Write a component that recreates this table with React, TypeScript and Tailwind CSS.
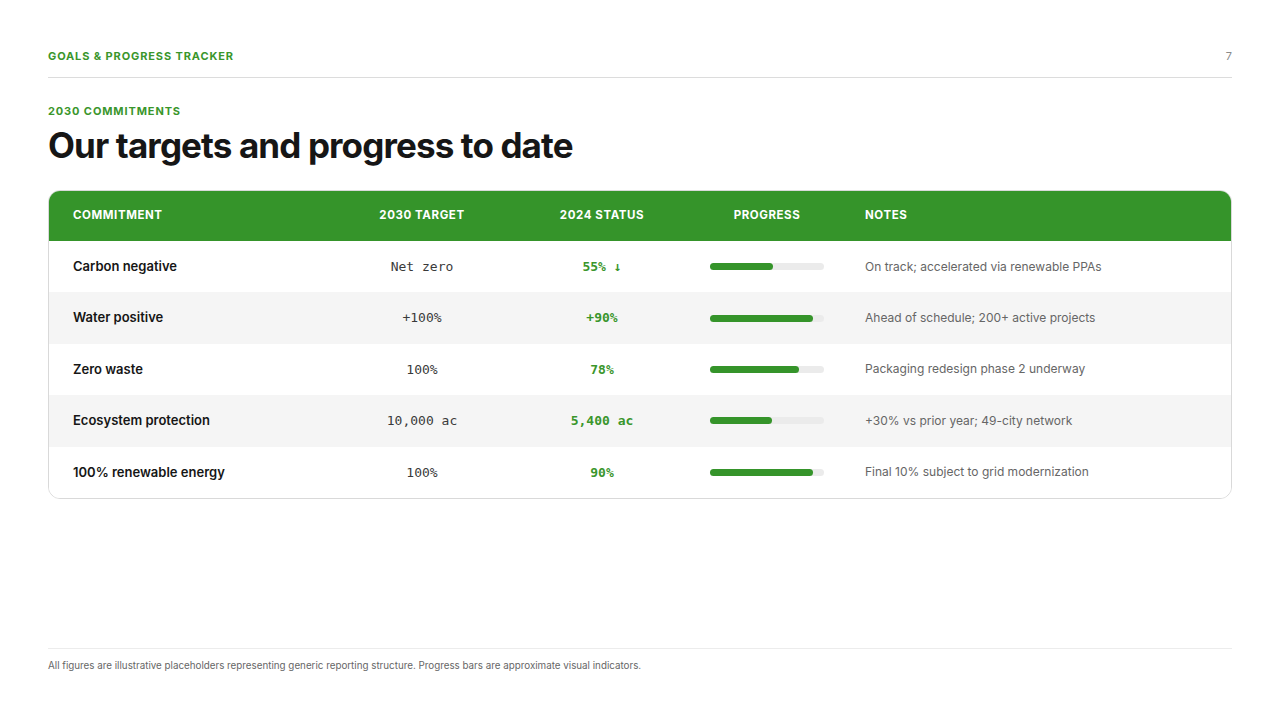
const rows = [
  { name: 'Carbon negative', target: 'Net zero', status: '55% ↓', pct: 55, note: 'On track; accelerated via renewable PPAs' },
  { name: 'Water positive', target: '+100%', status: '+90%', pct: 90, note: 'Ahead of schedule; 200+ active projects' },
  { name: 'Zero waste', target: '100%', status: '78%', pct: 78, note: 'Packaging redesign phase 2 underway' },
  { name: 'Ecosystem protection', target: '10,000 ac', status: '5,400 ac', pct: 54, note: '+30% vs prior year; 49-city network' },
  { name: '100% renewable energy', target: '100%', status: '90%', pct: 90, note: 'Final 10% subject to grid modernization' },
]

const cols = 'grid grid-cols-[284px_178px_182px_148px_1fr] items-center'
const mono = "font-['DejaVu_Sans_Mono',monospace]"

export default function App() {
  return (
    <div className="w-[1280px] h-[720px] bg-white px-12 flex flex-col font-['Inter','Noto_Sans',sans-serif] text-[#1a1a1a]">
      <div className="flex items-center justify-between pt-[48px] pb-[12px] border-b border-[#dcdcdc]">
        <span className="text-[11px] font-bold tracking-[0.08em] text-[#3a962c]">GOALS &amp; PROGRESS TRACKER</span>
        <span className="text-[11px] text-[#8a8a8a]">7</span>
      </div>

      <div className="mt-[25px] text-[11px] font-bold tracking-[0.08em] text-[#3a962c]">2030 COMMITMENTS</div>
      <h1 className="mt-[4px] text-[35px] leading-[44px] font-bold tracking-[-0.025em] text-[#161616]">Our targets and progress to date</h1>

      <div className="mt-[23px] rounded-[12px] border border-[#d9d9d9] overflow-hidden">
        <div className={`${cols} h-[50px] bg-[#35942a] text-white text-[11.5px] font-bold tracking-[0.05em]`}>
          <div className="pl-6">COMMITMENT</div>
          <div className="text-center">2030 TARGET</div>
          <div className="text-center">2024 STATUS</div>
          <div className="text-center">PROGRESS</div>
          <div className="pl-6">NOTES</div>
        </div>
        {rows.map((r, i) => (
          <div key={r.name} className={`${cols} h-[51.4px] ${i % 2 === 1 ? 'bg-[#f5f5f5]' : 'bg-white'}`}>
            <div className="pl-6 text-[13px] font-semibold text-[#161616]">{r.name}</div>
            <div className={`text-center text-[13px] text-[#3a3a3a] ${mono}`}>{r.target}</div>
            <div className={`text-center text-[13px] font-bold text-[#3a962c] ${mono}`}>{r.status}</div>
            <div className="flex justify-center">
              <div className="w-[114px] h-[7px] rounded-full bg-[#ebebeb]">
                <div className="h-full rounded-full bg-[#35942a]" style={{ width: `${r.pct}%` }} />
              </div>
            </div>
            <div className="pl-6 text-[12px] text-[#666]">{r.note}</div>
          </div>
        ))}
      </div>

      <div className="mt-auto mb-[46px] border-t border-[#ececec] pt-[10px] text-[9.8px] text-[#666]">
        All figures are illustrative placeholders representing generic reporting structure. Progress bars are approximate visual indicators.
      </div>
    </div>
  )
}
